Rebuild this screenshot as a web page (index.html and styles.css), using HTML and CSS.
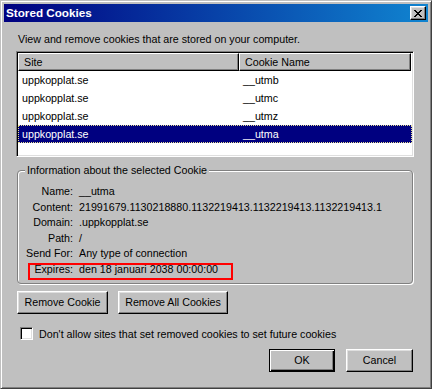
FILE: index.html
```html
<!DOCTYPE html>
<html lang="en">
<head>
<meta charset="UTF-8" />
<title>Stored Cookies</title>
<link rel="stylesheet" href="styles.css">
</head>
<body>
  <div class="window">

    <div class="titlebar">
      <span class="title">Stored Cookies</span>
      <span class="close">
        <svg width="8" height="7" viewBox="0 0 8 7" shape-rendering="crispEdges">
          <path d="M0 0h2v1H0z M6 0h2v1H6z M1 1h2v1H1z M5 1h2v1H5z M2 2h4v1H2z M3 3h2v1H3z M2 4h4v1H2z M1 5h2v1H1z M5 5h2v1H5z M0 6h2v1H0z M6 6h2v1H6z" fill="#000"/>
        </svg>
      </span>
    </div>

    <div class="content">
      <p class="intro">View and remove cookies that are stored on your computer.</p>

      <div class="listbox">
        <div class="list-head">
          <div class="col col-site">Site</div>
          <div class="col col-name">Cookie Name</div>
        </div>
        <div class="row"><span class="cell-site">uppkopplat.se</span><span class="cell-name">__utmb</span></div>
        <div class="row"><span class="cell-site">uppkopplat.se</span><span class="cell-name">__utmc</span></div>
        <div class="row"><span class="cell-site">uppkopplat.se</span><span class="cell-name">__utmz</span></div>
        <div class="row selected"><span class="cell-site">uppkopplat.se</span><span class="cell-name">__utma</span></div>
      </div>

      <fieldset class="info">
        <legend>Information about the selected Cookie</legend>
        <div class="fields">
          <span class="label">Name:</span><span>__utma</span>
          <span class="label">Content:</span><span>21991679.1130218880.1132219413.1132219413.1132219413.1</span>
          <span class="label">Domain:</span><span>.uppkopplat.se</span>
          <span class="label">Path:</span><span>/</span>
          <span class="label">Send For:</span><span>Any type of connection</span>
          <span class="label">Expires:</span><span>den 18 januari 2038 00:00:00</span>
          <div class="mark"></div>
        </div>
      </fieldset>

      <div class="actions">
        <button class="btn btn-remove">Remove Cookie</button>
        <button class="btn btn-remove-all">Remove All Cookies</button>
      </div>

      <div class="check">
        <span class="checkbox"></span>
        <span>Don't allow sites that set removed cookies to set future cookies</span>
      </div>

      <div class="footer">
        <button class="btn btn-ok">OK</button>
        <button class="btn btn-cancel">Cancel</button>
      </div>
    </div>

  </div>
</body>
</html>
```

FILE: styles.css
```css
* {
  box-sizing: border-box;
}

body {
  margin: 0;
  font-family: "Liberation Sans", Arial, sans-serif;
  font-size: 10.7px;
  color: #000;
  background: #c0c0c0;
}

.window {
  width: 432px;
  height: 389px;
  background: #c0c0c0;
  border: 1px solid;
  border-color: #c0c0c0 #404040 #404040 #c0c0c0;
  box-shadow: inset 1px 1px #fff, inset -1px -1px #808080;
  padding: 3px;
}

/* title bar */
.titlebar {
  height: 18px;
  background: linear-gradient(to right, #000080, #1084d0);
  display: flex;
  align-items: center;
  justify-content: space-between;
  padding: 0 2px;
}

.title {
  color: #fff;
  font-weight: bold;
  font-size: 11.7px;
  line-height: 18px;
}

.close {
  width: 16px;
  height: 14px;
  background: #c0c0c0;
  border: 1px solid;
  border-color: #fff #000 #000 #fff;
  box-shadow: inset -1px -1px #808080, inset 1px 1px #dfdfdf;
  display: flex;
  align-items: center;
  justify-content: center;
  padding-right: 1px;
}

.close svg {
  display: block;
}

.content {
  padding: 0 10px 0 12px;
}

.intro {
  margin: 10px 0 0 2px;
  line-height: 14px;
}

/* cookie list */
.listbox {
  margin-top: 5px;
  width: 398px;
  height: 106px;
  background: #fff;
  border: 1px solid;
  border-color: #808080 #fff #fff #808080;
  box-shadow: inset 1px 1px #000, inset -1px -1px #dfdfdf;
  padding: 1px;
}

.list-head {
  display: flex;
  height: 18px;
}

.col {
  background: #c0c0c0;
  border: 1px solid;
  border-color: #fff #000 #000 #fff;
  box-shadow: inset -1px -1px #808080;
  padding-left: 5px;
  line-height: 16px;
}

.col-site {
  width: 221px;
}

.col-name {
  width: 172px;
}

.row {
  display: flex;
  height: 18px;
  line-height: 18px;
}

.cell-site {
  width: 221px;
  padding-left: 4px;
}

.cell-name {
  padding-left: 4px;
}

.row.selected {
  background: #000080;
  color: #fff;
  outline: 1px dotted #e8e090;
  outline-offset: -1px;
}

/* info group */
.info {
  margin: 6px 0 0 1px;
  width: 396px;
  padding: 7px 0 5px 0;
  border: 1px solid #808080;
  border-radius: 4px;
  box-shadow: inset 1px 1px #fff, 1px 1px #fff;
}

.info legend {
  margin-left: 7px;
  padding: 0 2px;
  line-height: 14px;
  background: #c0c0c0;
}

.fields {
  position: relative;
  display: grid;
  grid-template-columns: 55px auto;
  column-gap: 6px;
  grid-auto-rows: 15.6px;
  line-height: 15.6px;
}

.label {
  text-align: right;
}

.mark {
  position: absolute;
  left: 10px;
  top: 79px;
  width: 205px;
  height: 17px;
  border: 2px solid #ff0000;
}

/* buttons */
.btn {
  height: 23px;
  padding: 0;
  font: inherit;
  color: #000;
  background: #c0c0c0;
  border: 1px solid;
  border-color: #fff #000 #000 #fff;
  box-shadow: inset -1px -1px #808080, inset 1px 1px #dfdfdf;
}

.actions {
  display: flex;
  gap: 10px;
  margin: 7px 0 0 1px;
}

.btn-remove {
  width: 91px;
}

.btn-remove-all {
  width: 110px;
}

.check {
  display: flex;
  align-items: center;
  gap: 6px;
  margin: 13px 0 0 4px;
  line-height: 14px;
}

.checkbox {
  width: 13px;
  height: 13px;
  background: #fff;
  border: 1px solid;
  border-color: #808080 #fff #fff #808080;
  box-shadow: inset 1px 1px #000, inset -1px -1px #dfdfdf;
}

.footer {
  display: flex;
  justify-content: flex-end;
  gap: 11px;
  width: 397px;
  margin-top: 8px;
}

.btn-ok {
  width: 66px;
  border-color: #000;
  box-shadow: inset 1px 1px #fff, inset -1px -1px #000, inset -2px -2px #808080;
}

.btn-cancel {
  width: 67px;
}
```
